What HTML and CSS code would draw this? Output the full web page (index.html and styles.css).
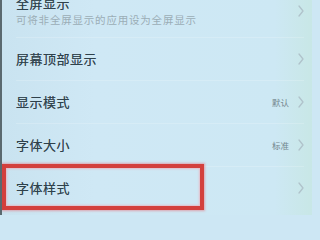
FILE: index.html
```html
<!DOCTYPE html>
<html lang="zh-CN">
<head>
<meta charset="utf-8">
<link rel="stylesheet" href="styles.css">
</head>
<body>
<div class="screen">
  <div class="list">
    <div class="row row-first">
      <div class="texts">
        <div class="title">全屏显示</div>
        <div class="sub">可将非全屏显示的应用设为全屏显示</div>
      </div>
      <svg class="chev" viewBox="0 0 6 12" width="6" height="12"><polyline points="1,1 5,6 1,11"/></svg>
    </div>
    <div class="row">
      <div class="title">屏幕顶部显示</div>
      <svg class="chev" viewBox="0 0 6 12" width="6" height="12"><polyline points="1,1 5,6 1,11"/></svg>
    </div>
    <div class="row">
      <div class="title">显示模式</div>
      <div class="right"><span class="value">默认</span><svg class="chev" viewBox="0 0 6 12" width="6" height="12"><polyline points="1,1 5,6 1,11"/></svg></div>
    </div>
    <div class="row">
      <div class="title">字体大小</div>
      <div class="right"><span class="value">标准</span><svg class="chev" viewBox="0 0 6 12" width="6" height="12"><polyline points="1,1 5,6 1,11"/></svg></div>
    </div>
    <div class="row row-last">
      <div class="title">字体样式</div>
      <svg class="chev" viewBox="0 0 6 12" width="6" height="12"><polyline points="1,1 5,6 1,11"/></svg>
    </div>
  </div>
  <div class="highlight"></div>
</div>
</body>
</html>
```

FILE: styles.css
```css
html, body {
  margin: 0;
  padding: 0;
}
body {
  width: 312px;
  height: 215px;
  overflow: hidden;
  background: #cde7f4;
  font-family: "Noto Sans CJK SC", "Noto Sans", sans-serif;
}
.screen {
  position: relative;
  width: 312px;
  height: 215px;
  box-sizing: border-box;
  border-left: 2px solid #5a696f;
  background: linear-gradient(90deg, #c9e3f0 0%, #cfe8f5 30%, #cde8f4 88%, #c8e7e6 100%);
  overflow: hidden;
}
.list {
  margin-top: -15px;
  padding-left: 14px;
  padding-right: 8px;
}
.row {
  display: flex;
  align-items: center;
  justify-content: space-between;
  height: 43px;
  border-bottom: 1px solid rgba(255, 255, 255, 0.18);
  box-sizing: border-box;
}
.row-first {
  height: 53px;
}
.row-last {
  height: 41px;
  border-bottom: none;
}
.texts {
  display: flex;
  flex-direction: column;
  gap: 2px;
}
.title {
  font-size: 13px;
  line-height: 16px;
  letter-spacing: 0.5px;
  color: #2f414b;
  text-shadow: 0 0 0.6px rgba(47, 65, 75, 0.6);
}
.sub {
  font-size: 10.5px;
  line-height: 14px;
  letter-spacing: 0.8px;
  color: #9badb6;
}
.right {
  display: flex;
  align-items: center;
  gap: 9px;
}
.value {
  font-size: 8.5px;
  line-height: 12px;
  color: #74878f;
}
.chev {
  display: block;
  width: 6px;
  height: 12px;
}
.chev polyline {
  fill: none;
  stroke: #b0c3cb;
  stroke-width: 1.3;
  stroke-linecap: round;
  stroke-linejoin: round;
}
.highlight {
  position: absolute;
  left: 0px;
  top: 164px;
  width: 202px;
  height: 46px;
  box-sizing: border-box;
  border: 4px solid #d3403d;
  box-shadow: 0 0 2px 1px rgba(230, 120, 130, 0.6), inset 0 0 2px 1px rgba(240, 170, 180, 0.7);
}
```
